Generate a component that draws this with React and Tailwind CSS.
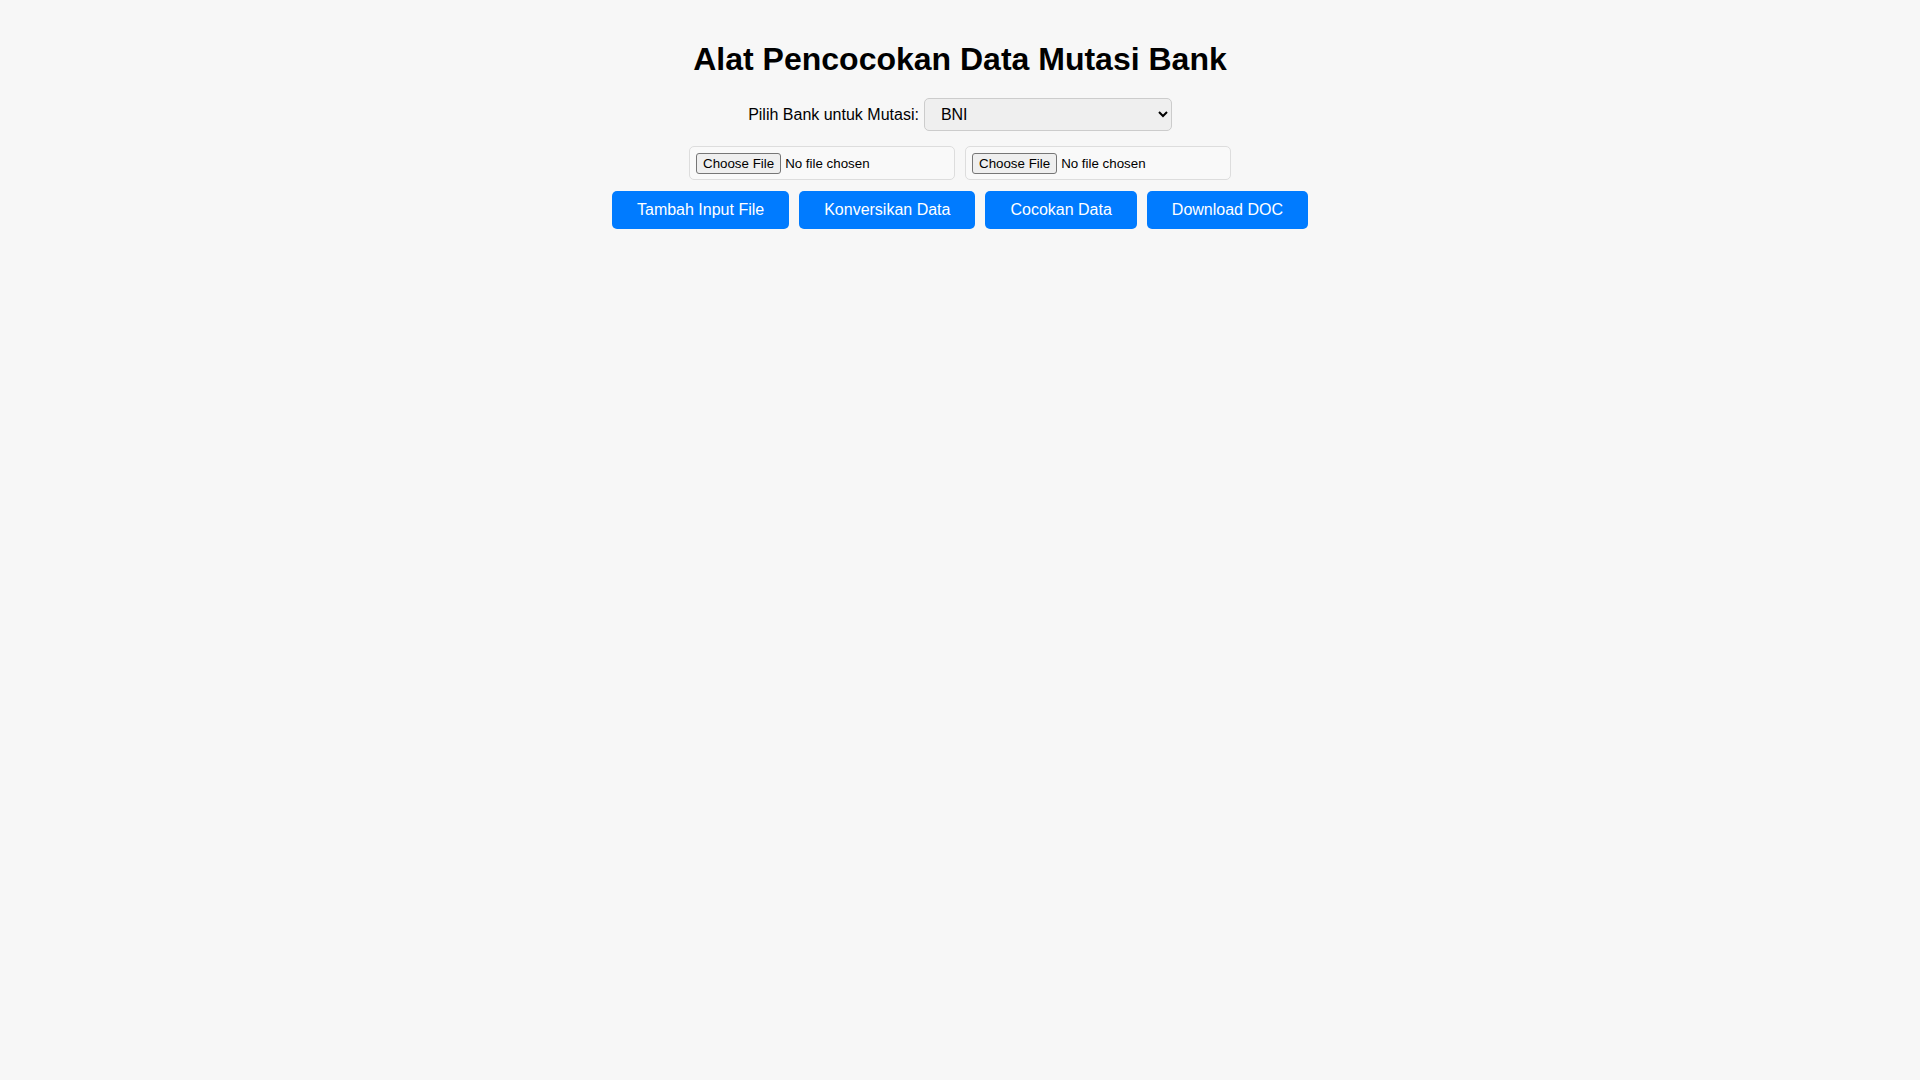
import { useState } from "react";

const buttons = ["Tambah Input File", "Konversikan Data", "Cocokan Data", "Download DOC"];

export default function App() {
  const [bank, setBank] = useState("BNI");

  return (
    <div className="min-h-screen bg-[#f7f7f7] pt-5 text-black font-['Liberation_Sans',Arial,sans-serif] text-center">
      <h1 className="mt-[20.5px] mb-[20.5px] h-[37px] text-[32px] leading-[37px] font-bold">
        Alat Pencocokan Data Mutasi Bank
      </h1>

      {/* Bank selector */}
      <div className="flex items-center justify-center gap-[5px] h-[33px]">
        <label htmlFor="bank" className="text-base">Pilih Bank untuk Mutasi:</label>
        <select
          id="bank"
          value={bank}
          onChange={(e) => setBank(e.target.value)}
          className="w-[248px] h-[33px] px-3 text-base bg-[#efefef] border border-[#cccccc] rounded-[5px] text-left"
        >
          <option value="BNI">BNI</option>
          <option value="BCA">BCA</option>
          <option value="BRI">BRI</option>
          <option value="Mandiri">Mandiri</option>
        </select>
      </div>

      {/* File inputs */}
      <div className="flex justify-center gap-[10px] mt-[15px]">
        {[0, 1].map((i) => (
          <input
            key={i}
            type="file"
            className="block w-[266px] h-[34px] px-[6px] pt-[6px] pb-[4px] border border-[#dddddd] rounded-[5px] bg-[#f9f9f9] text-[13.33px] leading-[22px] file:mr-1 file:h-[21px] file:px-[6px] file:bg-[#efefef] file:border file:border-solid file:border-[#767676] file:rounded-[3px] file:text-[13.33px] file:leading-[17px] file:text-black"
          />
        ))}
      </div>

      {/* Actions */}
      <div className="flex justify-center gap-[10px] mt-[11px]">
        {buttons.map((label) => (
          <button
            key={label}
            className="h-[38px] px-[25px] bg-[#007bff] text-white text-base rounded-[5px] cursor-pointer"
          >
            {label}
          </button>
        ))}
      </div>
    </div>
  );
}
